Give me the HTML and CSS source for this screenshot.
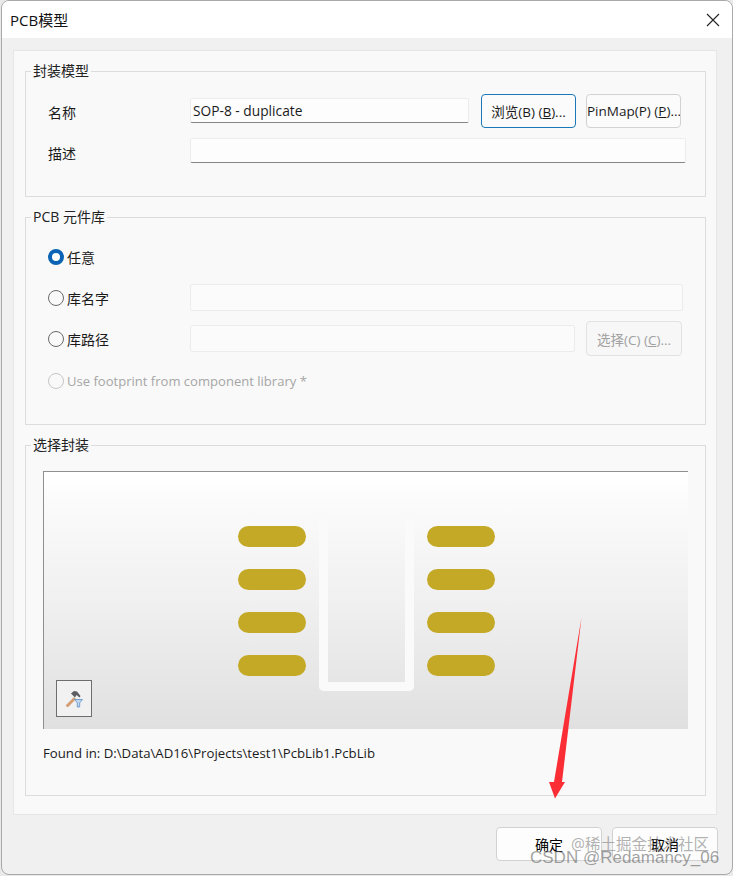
FILE: index.html
```html
<!doctype html>
<html lang="en">

<head>
  <meta charset="UTF-8" />
  <title>PCB模型</title>
  <link rel="stylesheet" href="styles.css">
</head>

<body>
  <div class="dialog">
    <div class="titlebar">
      <span class="title">PCB模型</span>
      <svg class="close-icon" width="14" height="14" viewBox="0 0 14 14">
        <path d="M1 1L13 13M13 1L1 13" stroke="#222" stroke-width="1.1" fill="none" />
      </svg>
    </div>

    <div class="content">
      <div class="panel">
        <fieldset class="group group-model">
          <legend>封装模型</legend>
          <div class="group-body body-model">
            <div class="model-row">
              <label class="field-label">名称</label>
              <div class="input input-name">SOP-8 - duplicate</div>
              <button class="btn btn-focus">浏览(B) (<u>B</u>)...</button>
              <button class="btn">PinMap(P) (<u>P</u>)...</button>
            </div>
            <div class="model-row model-row-desc">
              <label class="field-label">描述</label>
              <div class="input input-desc"></div>
            </div>
          </div>
        </fieldset>

        <fieldset class="group group-lib">
          <legend>PCB 元件库</legend>
          <div class="group-body body-lib">
            <div class="lib-row">
              <span class="radio radio-on"></span>
              <span class="radio-text">任意</span>
            </div>
            <div class="lib-row">
              <span class="radio"></span>
              <span class="radio-text">库名字</span>
              <div class="input-off input-off-wide"></div>
            </div>
            <div class="lib-row">
              <span class="radio"></span>
              <span class="radio-text">库路径</span>
              <div class="input-off input-off-path"></div>
              <button class="btn btn-off">选择(C) (<u>C</u>)...</button>
            </div>
            <div class="lib-row lib-row-use">
              <span class="radio radio-off"></span>
              <span class="radio-text text-off">Use footprint from component library *</span>
            </div>
          </div>
        </fieldset>

        <fieldset class="group group-pick">
          <legend>选择封装</legend>
          <div class="group-body body-pick">
            <div class="preview">
              <div class="package">
                <div class="pad-col">
                  <span class="pad"></span>
                  <span class="pad"></span>
                  <span class="pad"></span>
                  <span class="pad"></span>
                </div>
                <div class="outline"></div>
                <div class="pad-col">
                  <span class="pad"></span>
                  <span class="pad"></span>
                  <span class="pad"></span>
                  <span class="pad"></span>
                </div>
              </div>
              <button class="tool-btn">
                <svg width="19" height="18" viewBox="0 0 19 18">
                  <path d="M1 15.500L9 7.500L10.500 9L2.800 17Z" fill="#dc9c6e" stroke="#b98054" stroke-width=".5" />
                  <path d="M6 3.500L9 1L12 1.500L15.500 6L14.500 7.500L11.500 5L10 7.500L8 5.500Z" fill="#5a5d61" />
                  <path d="M9.500 9.500H17.500L14.700 12.800V17H12.300V12.800Z" fill="#c3d7ef" stroke="#5a8fca" stroke-width=".8" />
                </svg>
              </button>
            </div>
            <p class="found">Found in: D:\Data\AD16\Projects\test1\PcbLib1.PcbLib</p>
          </div>
        </fieldset>
      </div>

      <div class="actions">
        <button class="btn btn-action">确定</button>
        <button class="btn btn-action">取消</button>
      </div>
    </div>
  </div>

  <!-- annotations added on top of the screenshot -->
  <svg class="arrow" width="60" height="200" viewBox="0 0 60 200">
    <path d="M41.500 0.500L22 165L25 165L15 181.500L9 165L14 165Z" fill="#fb2d35" />
  </svg>
  <div class="mark mark-a">@稀土掘金技术社区</div>
  <div class="mark mark-b">CSDN @Redamancy_06</div>
</body>

</html>
```

FILE: styles.css
```css
html,
body {
  margin: 0;
  padding: 0;
  background-color: #e9e9e9;
}

body {
  position: relative;
  width: 733px;
  height: 876px;
  overflow: hidden;
  font-family: "Open Sans", "Noto Sans CJK SC", sans-serif;
  font-size: 14px;
  color: #1b1b1b;
}

.dialog {
  box-sizing: border-box;
  width: 732px;
  height: 875px;
  margin-left: 1px;
  border: 1px solid #a9a9a9;
  border-radius: 8px;
  background-color: #f0f0f0;
  overflow: hidden;
}

.titlebar {
  display: flex;
  align-items: center;
  justify-content: space-between;
  height: 37px;
  padding: 0 12px 0 8px;
  background-color: #ffffff;
}

.title {
  font-size: 15px;
  color: #111;
}

.content {
  padding: 12px 15px 0 11px;
}

.panel {
  box-sizing: border-box;
  height: 765px;
  padding: 10px 10px 0 11px;
  background-color: #f9f9f9;
  border: 1px solid #e6e6e6;
}

/* group boxes */
.group {
  box-sizing: border-box;
  margin: 0 0 10px;
  padding: 0;
  border: 1px solid #dcdcdc;
  min-width: 0;
}

.group legend {
  margin-left: 5px;
  padding: 0 2px;
  font-size: 14px;
  line-height: 20px;
  color: #222;
}

.group-model {
  height: 136px;
}

.group-lib {
  height: 218px;
}

.group-pick {
  height: 361px;
  margin-bottom: 0;
}

.body-model {
  padding: 13px 0 0 22px;
}

.body-lib {
  padding: 16px 0 0 22px;
}

.body-pick {
  padding: 16px 0 0 17px;
}

.model-row {
  display: flex;
  align-items: center;
  height: 34px;
}

.model-row-desc {
  height: 25px;
  margin-top: 10px;
}

.field-label {
  width: 142px;
  flex: none;
  padding-top: 1px;
}

.model-row-desc .field-label {
  padding-top: 5px;
}

.input {
  box-sizing: border-box;
  height: 25px;
  padding: 0 2px;
  font-size: 13.75px;
  line-height: 23px;
  background-color: #fdfdfd;
  border: 1px solid #ececec;
  border-bottom: 1px solid #858585;
  border-radius: 2px;
}

.input-name {
  position: relative;
  top: -1px;
  width: 279px;
  margin-right: 12px;
}

.input-desc {
  width: 496px;
}

/* buttons */
.btn {
  box-sizing: border-box;
  width: 95px;
  height: 34px;
  margin: 0 10px 0 0;
  padding: 0;
  flex: none;
  background-color: #fbfbfb;
  border: 1px solid #d2d2d2;
  border-radius: 4px;
  font: inherit;
  font-size: 13.5px;
  color: #1b1b1b;
  white-space: nowrap;
  overflow: hidden;
}

.btn-focus {
  border-color: #1a78b8;
}

.btn-off {
  width: 96px;
  height: 35px;
  margin-left: 11px;
  color: #a0a0a0;
  background-color: #f7f7f7;
  border-color: #e2e2e2;
}

.btn-action {
  width: 106px;
  margin: 0;
  background-color: #fdfdfd;
  font-size: 14px;
  color: #000;
}

/* radios */
.lib-row {
  display: flex;
  align-items: center;
  height: 27px;
  margin-bottom: 14px;
}

.lib-row-use {
  margin-top: 15px;
}

.radio {
  box-sizing: border-box;
  width: 16px;
  height: 16px;
  flex: none;
  margin-right: 3px;
  border: 1px solid #6a6a6a;
  border-radius: 50%;
  background-color: #f9f9f9;
}

.radio-on {
  border: 4.5px solid #0a63b4;
  background-color: #ffffff;
}

.radio-off {
  border-color: #c6c6c6;
}

.radio-text {
  width: 123px;
  flex: none;
  white-space: nowrap;
}

.text-off {
  font-size: 13.06px;
  color: #a6a6a6;
}

.input-off {
  box-sizing: border-box;
  height: 27px;
  background-color: #fbfbfb;
  border: 1px solid #ececec;
  border-radius: 2px;
}

.input-off-wide {
  width: 493px;
}

.input-off-path {
  width: 385px;
}

/* footprint preview */
.preview {
  position: relative;
  box-sizing: border-box;
  width: 645px;
  height: 258px;
  border-top: 1px solid #8f8f8f;
  border-left: 1px solid #8f8f8f;
  background: linear-gradient(#ffffff, #fafafa 15%, #f0f0f0 50%, #e0e0e0 100%);
}

.package {
  display: flex;
  gap: 13px;
  padding-left: 194px;
}

.pad-col {
  display: flex;
  flex-direction: column;
  gap: 22px;
  padding-top: 54px;
}

.pad {
  display: block;
  width: 68px;
  height: 21px;
  border-radius: 10.500px;
  background-color: #c3a926;
}

.outline {
  box-sizing: border-box;
  width: 95px;
  height: 172px;
  margin: 47px 0 0;
  border: 9px solid #fafafa;
  border-top: 0;
  border-radius: 0 0 5px 5px;
}

.tool-btn {
  position: absolute;
  left: 12px;
  top: 208px;
  box-sizing: border-box;
  display: flex;
  align-items: center;
  justify-content: center;
  width: 36px;
  height: 37px;
  padding: 0;
  background-color: #f1f1f1;
  border: 1px solid #6e6e6e;
}

.found {
  margin: 15px 0 0;
  font-size: 13.2px;
  line-height: 18px;
}

.actions {
  display: flex;
  justify-content: flex-end;
  gap: 10px;
  margin-top: 12px;
  margin-right: -1px;
}

/* overlays */
.arrow {
  position: absolute;
  left: 540px;
  top: 617px;
}

.mark {
  position: absolute;
  white-space: nowrap;
}

.mark-a {
  left: 571px;
  top: 833px;
  font-size: 15.5px;
  line-height: 22px;
  color: rgba(110, 110, 110, .55);
}

.mark-b {
  left: 530px;
  top: 847px;
  font-family: "Liberation Sans", sans-serif;
  font-size: 17px;
  line-height: 22px;
  color: rgba(100, 100, 100, .6);
}
```
